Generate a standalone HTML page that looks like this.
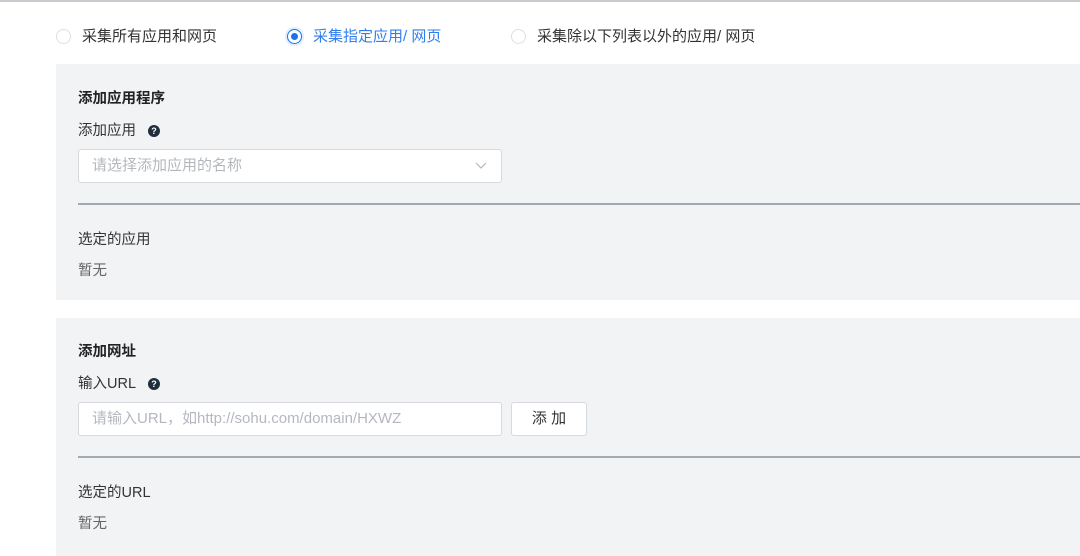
<!DOCTYPE html>
<html><head><meta charset="utf-8"><style>
body{margin:0;width:1080px;height:556px;background:#fff;position:relative;overflow:hidden;font-family:"Liberation Sans","Noto Sans CJK SC",sans-serif;font-size:14.5px;color:#333}
.a{position:absolute;white-space:nowrap}
.topline{position:absolute;left:0;top:0;width:1080px;height:2px;background:#c8ccd1}
.radio{position:absolute;width:13px;height:13px;border:1px solid #dcdfe3;border-radius:50%;background:#fff}
.radio.on{border-color:#1a73e8;box-shadow:0 0 0 2px #e3edfb}
.radio.on::after{content:"";position:absolute;left:3px;top:3px;width:7px;height:7px;border-radius:50%;background:#1a73e8}
.panel{position:absolute;left:56px;width:1024px;background:#f2f3f5}
.h{font-weight:bold;font-size:14.5px;color:#222}
.q{display:inline-block;width:12px;height:12px;border-radius:50%;background:#1f2d3d;color:#fff;font-size:9px;font-weight:bold;text-align:center;line-height:12px;vertical-align:1px;margin-left:12px}
.input{position:absolute;background:#fff;border:1px solid #d6d9de;border-radius:3px;box-sizing:border-box;color:#b4b8be;font-size:15px;padding-left:13px;line-height:32px}
.div{position:absolute;left:78px;width:1002px;height:2px;background:#a3a9b0}
.gray{color:#666}
.r{font-size:15px;top:25px}
</style></head><body>
<div class="topline"></div>
<div class="radio" style="left:56px;top:29px"></div><div class="a r" style="left:82px">采集所有应用和网页</div>
<div class="radio on" style="left:287px;top:29px"></div><div class="a r" style="left:313px;color:#2f7ef0">采集指定应用/ 网页</div>
<div class="radio" style="left:511px;top:29px"></div><div class="a r" style="left:537px">采集除以下列表以外的应用/ 网页</div>

<div class="panel" style="top:64px;height:236px"></div>
<div class="a h" style="left:78px;top:87px">添加应用程序</div>
<div class="a" style="left:78px;top:119px">添加应用<span class="q">?</span></div>
<div class="input" style="left:78px;top:149px;width:424px;height:34px">请选择添加应用的名称
<svg style="position:absolute;right:14px;top:12px" width="12" height="8" viewBox="0 0 12 8"><path d="M1 1l5 5 5-5" fill="none" stroke="#b4b8be" stroke-width="1.2"/></svg></div>
<div class="div" style="top:203px"></div>
<div class="a" style="left:78px;top:228px">选定的应用</div>
<div class="a gray" style="left:78px;top:259px">暂无</div>

<div class="panel" style="top:318px;height:238px"></div>
<div class="a h" style="left:78px;top:340px">添加网址</div>
<div class="a" style="left:78px;top:372px">输入URL<span class="q">?</span></div>
<div class="input" style="left:78px;top:402px;width:424px;height:34px">请输入URL，如http://sohu.com/domain/HXWZ</div>
<div class="input" style="left:511px;top:402px;width:76px;height:34px;color:#333;padding:0;text-align:center">添 加</div>
<div class="div" style="top:456px"></div>
<div class="a" style="left:78px;top:481px">选定的URL</div>
<div class="a gray" style="left:78px;top:512px">暂无</div>
</body></html>
